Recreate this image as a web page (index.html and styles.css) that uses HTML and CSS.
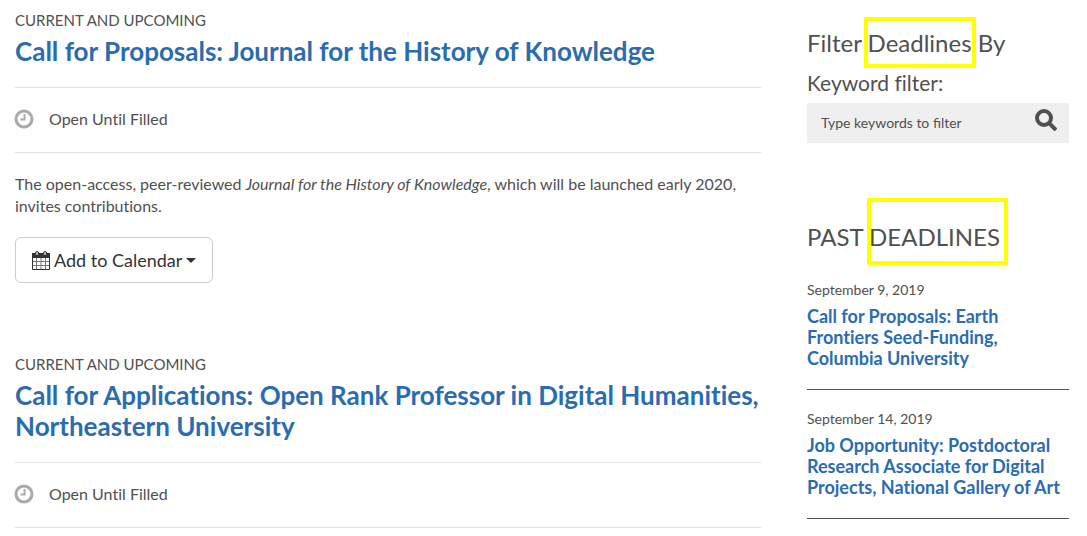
FILE: index.html
```html
<!DOCTYPE html>
<html lang="en">
<head>
	<title>Deadlines</title>
	<meta charset="UTF-8">
	<meta name="viewport" content="width=device-width, initial-scale=1">

	<link rel="stylesheet" href="styles.css">
</head>
<body>

    <div class="page">
        <main>
            <article class="deadline">
                <p class="category">CURRENT AND UPCOMING</p>
                <h2><a href="#">Call for Proposals: Journal for the History of Knowledge</a></h2>
                <div class="date">
                    <svg class="clock" viewBox="0 0 20 20" aria-hidden="true">
                        <circle cx="10" cy="10" r="8" />
                        <path d="M10.500 5V10.500H6.500" />
                    </svg>
                    <span>Open Until Filled</span>
                </div>
                <p class="description">The open-access, peer-reviewed <em>Journal for the History of Knowledge</em>, which will be launched early 2020, invites contributions.</p>
                <button class="btn-calendar" type="button">
                    <svg class="calendar" viewBox="0 0 18 19" aria-hidden="true">
                        <path d="M0.500 2.500h17v16h-17z" fill="#fff" stroke="#333" />
                        <path d="M0 2h18v5H0z" fill="#333" />
                        <path d="M4.500 7v11M9 7v11M13.500 7v11M1 10.500h16M1 14.500h16" stroke="#777" />
                        <rect x="3.500" y="0.500" width="3" height="4" rx="1.500" fill="#ccc" stroke="#333" />
                        <rect x="11.500" y="0.500" width="3" height="4" rx="1.500" fill="#ccc" stroke="#333" />
                    </svg>
                    Add to Calendar
                    <span class="caret"></span>
                </button>
            </article>

            <article class="deadline">
                <p class="category">CURRENT AND UPCOMING</p>
                <h2><a href="#">Call for Applications: Open Rank Professor in Digital Humanities, Northeastern University</a></h2>
                <div class="date">
                    <svg class="clock" viewBox="0 0 20 20" aria-hidden="true">
                        <circle cx="10" cy="10" r="8" />
                        <path d="M10.500 5V10.500H6.500" />
                    </svg>
                    <span>Open Until Filled</span>
                </div>
            </article>
        </main>

        <aside>
            <form class="filter">
                <h3>Filter <span class="mark mark-filter">Deadlines</span> By</h3>
                <label for="keyword">Keyword filter:</label>
                <div class="search">
                    <input id="keyword" type="text" placeholder="Type keywords to filter" />
                    <button type="submit" aria-label="Search">
                        <svg viewBox="0 0 22 22" aria-hidden="true">
                            <circle cx="9" cy="9" r="7" />
                            <path d="M14 14l7 7" />
                        </svg>
                    </button>
                </div>
            </form>

            <h3>PAST <span class="mark mark-past">DEADLINES</span></h3>
            <ul class="past">
                <li>
                    <time datetime="2019-09-09">September 9, 2019</time>
                    <a href="#">Call for Proposals: Earth Frontiers Seed-Funding, Columbia University</a>
                </li>
                <li>
                    <time datetime="2019-09-14">September 14, 2019</time>
                    <a href="#">Job Opportunity: Postdoctoral Research Associate for Digital Projects, National Gallery of Art</a>
                </li>
            </ul>
        </aside>
    </div>

</body>
</html>
```
FILE: styles.css
```css
* {
    box-sizing: border-box;
}
body {
    margin: 0;
    background-color: white;
    color: #505050;
    font-family: Lato, "Liberation Sans", sans-serif;
    font-size: 16px;
    font-variant-ligatures: none;
    line-height: 22px;
}
h2, h3, p, ul {
    margin: 0;
    padding: 0;
    font-weight: normal;
}
a {
    color: #2b6cb0;
    font-weight: bold;
    text-decoration: none;
}
a:hover {
    text-decoration: underline;
}
button, input {
    font-family: inherit;
}
.page {
    display: grid;
    grid-template-columns: minmax(0, 1fr) 262px;
    gap: 46px;
    padding: 9px 18px 0 15px;
}

/* Main list */
.deadline {
    margin-bottom: 70px;
}
.deadline:last-child {
    margin-bottom: 0;
}
.category {
    font-size: 15px;
}
.deadline h2 {
    padding: 5px 0 20px;
    font-size: 26px;
    line-height: 31px;
}
.date {
    display: flex;
    align-items: center;
    gap: 15px;
    height: 66px;
    padding-bottom: 2px;
    border-top: 1px solid #e1e1e1;
    border-bottom: 1px solid #e1e1e1;
}
.clock {
    width: 20px;
    height: 20px;
    margin-left: -1px;
    fill: none;
    stroke: #aaa;
    stroke-width: 3;
}
.clock path {
    stroke-width: 2;
}
.description {
    padding: 20px 0;
}
.btn-calendar {
    display: flex;
    align-items: center;
    gap: 4px;
    height: 46px;
    padding: 0 16px;
    border: 1px solid #ccc;
    border-radius: 6px;
    background-color: white;
    color: #333;
    font-size: 18px;
}
.calendar {
    width: 18px;
    height: 19px;
}
.caret {
    border: 5px solid transparent;
    border-top-color: #333;
    border-bottom: 0;
}

/* Sidebar */
h3 {
    font-size: 24px;
    line-height: 28px;
}
.filter {
    padding: 20px 0 80px;
}
.filter label {
    display: block;
    padding: 12px 0 6px;
    font-size: 21px;
    line-height: 28px;
}
.search {
    display: flex;
    height: 40px;
    background-color: #efefef;
}
.search input {
    flex: 1;
    min-width: 0;
    padding: 0 14px 2px;
    border: 0;
    background: none;
    color: #505050;
    font-size: 14px;
}
.search input::placeholder {
    color: #505050;
    opacity: 1;
}
.search button {
    padding: 6px 12px 12px;
    border: 0;
    background: none;
}
.search svg {
    display: block;
    width: 22px;
    height: 22px;
    fill: none;
    stroke: #505050;
    stroke-width: 4;
}
.mark {
    position: relative;
}
.mark::after {
    content: "";
    position: absolute;
    border: 4px solid #ff0;
    border-radius: 1px;
}
.mark-filter::after {
    inset: -11px -4px;
}
.mark-past::after {
    inset: -24px -8px -14px -2px;
}
.past {
    padding-top: 28px;
    list-style: none;
}
.past li {
    margin-bottom: 18px;
    padding-bottom: 20px;
    border-bottom: 1px solid #505050;
}
.past time {
    display: block;
    padding-bottom: 5px;
    font-size: 14px;
}
.past a {
    display: block;
    font-size: 18px;
    line-height: 21px;
}
```
